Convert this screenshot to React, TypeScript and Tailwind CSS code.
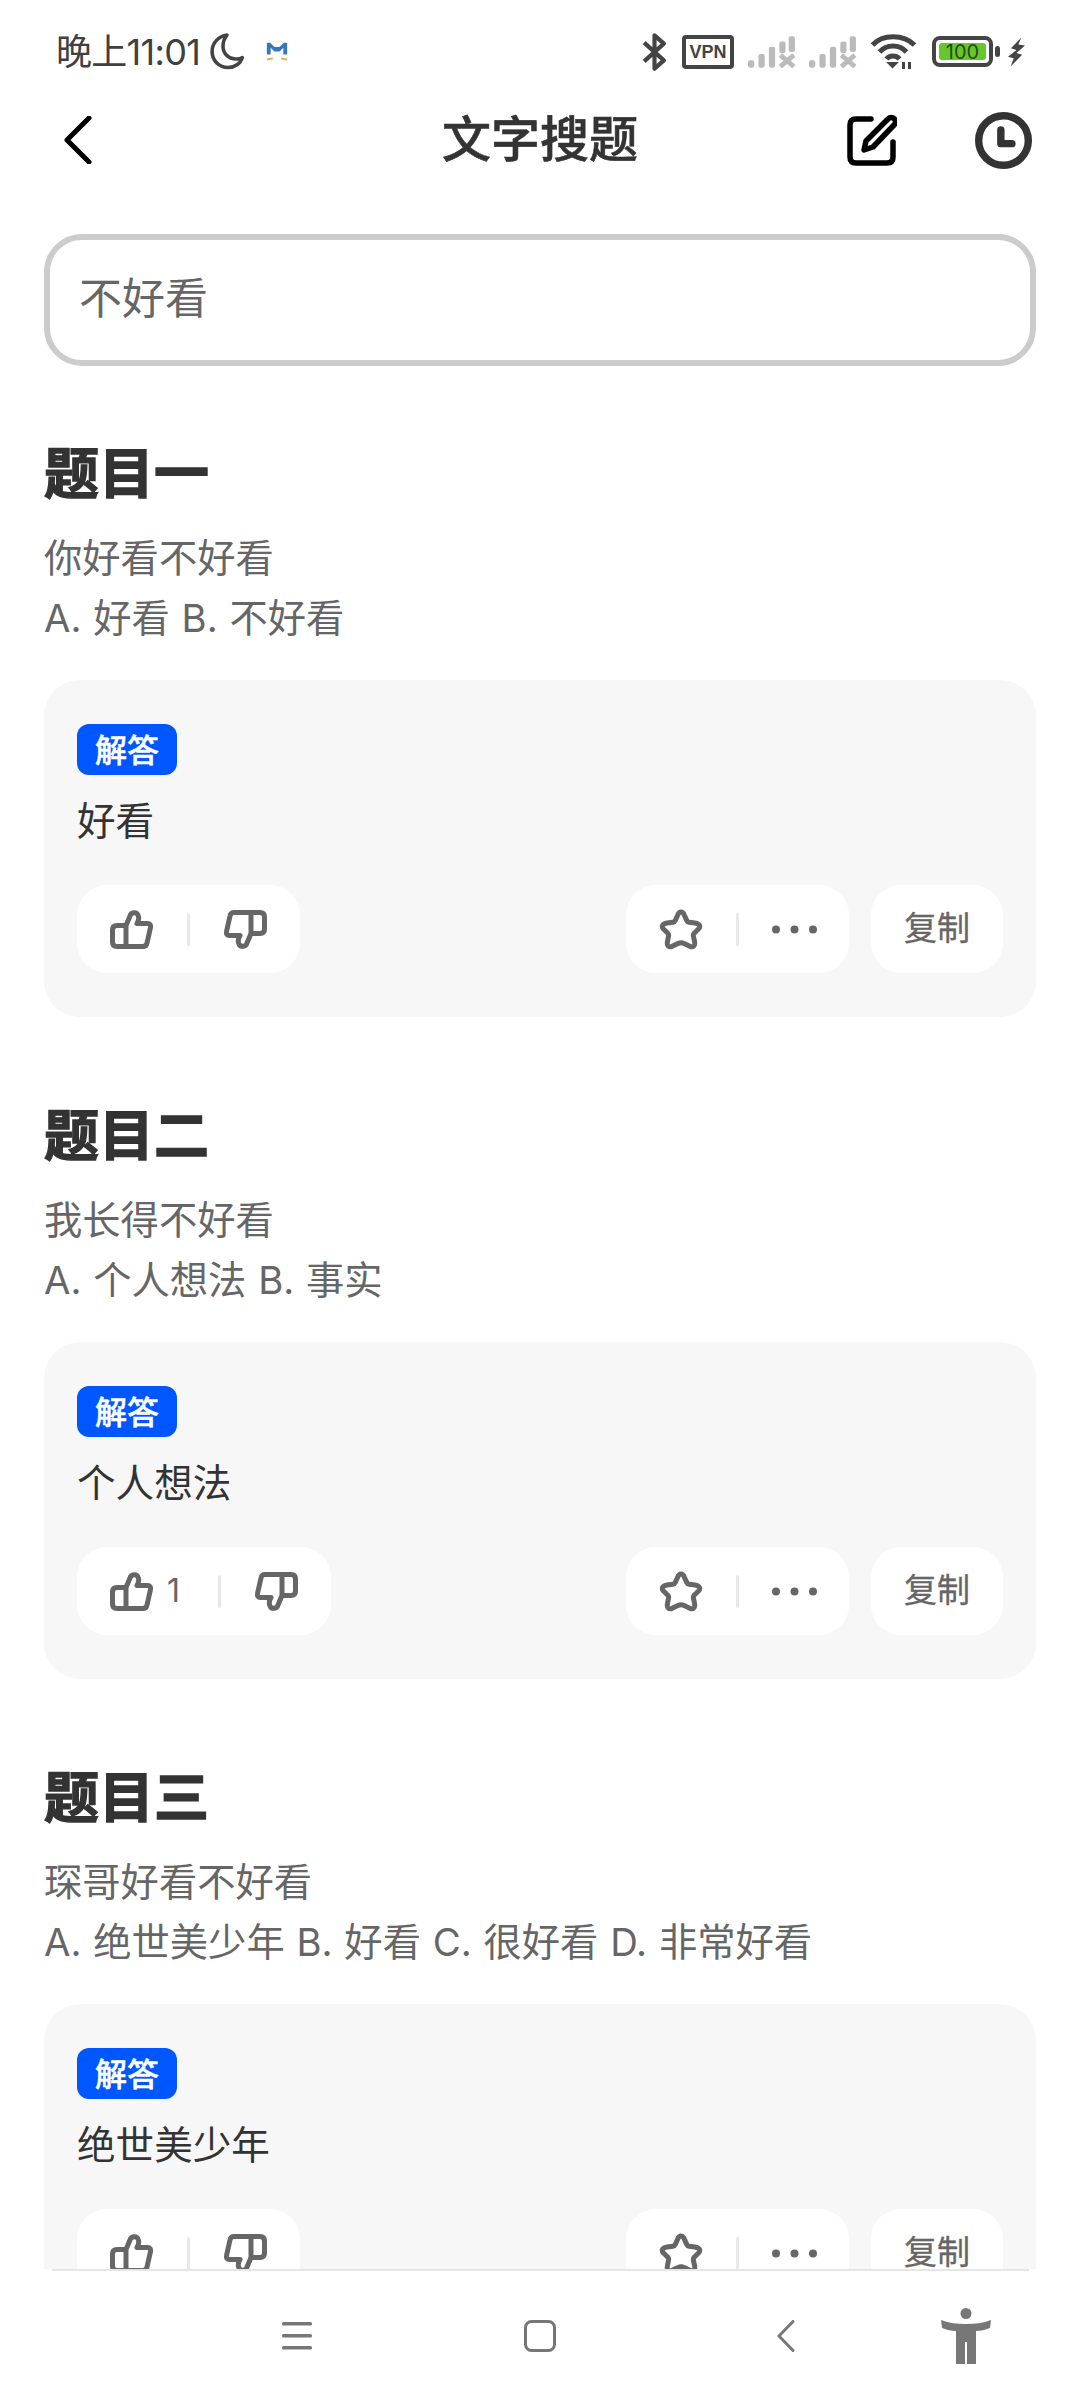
import React from 'react';

const questions = [
  { title: '题目一', text: '你好看不好看', options: 'A. 好看 B. 不好看', answer: '好看', likes: 0 },
  { title: '题目二', text: '我长得不好看', options: 'A. 个人想法 B. 事实', answer: '个人想法', likes: 1 },
  { title: '题目三', text: '琛哥好看不好看', options: 'A. 绝世美少年 B. 好看 C. 很好看 D. 非常好看', answer: '绝世美少年', likes: 0 },
];

const ThumbIcon: React.FC<{ down?: boolean }> = ({ down }) => (
  <svg width="43" height="39" viewBox="0 0 43 39" fill="none" stroke="#666" strokeWidth="5" strokeLinejoin="round" className={down ? 'rotate-180' : ''}>
    <path d="M16 36.5V15.5L20 6C21 2 26.5 1.5 28 5C29.5 8 28.5 11 27 13.5H37.5C40 13.5 41 15.5 40.5 17.5L37 33C36.5 35.5 35 36.5 33 36.5H7C4 36.5 2.5 35 2.5 32V20C2.5 17 4 15.5 7 15.5H16" />
  </svg>
);

const StarIcon = () => (
  <svg width="44" height="41" viewBox="0 0 44 41" fill="none" stroke="#666" strokeWidth="5" strokeLinejoin="round">
    <path d="M22 3C23.5 3 24.5 4 25.5 6.5L27.8 11.6C28.2 12.6 29 13.2 30 13.3L36 14C40.5 14.6 42 17.3 39.5 20L35.2 24.2C34.5 25 34.2 25.8 34.4 26.8L35.6 33C36.3 37.3 34 39 30.3 37L25 34.4C23 33.4 21 33.4 19 34.4L13.7 37C10 39 7.7 37.3 8.4 33L9.6 26.8C9.8 25.8 9.5 25 8.8 24.2L4.5 20C2 17.3 3.5 14.6 8 14L14 13.3C15 13.2 15.8 12.6 16.2 11.6L18.5 6.5C19.5 4 20.5 3 22 3Z" />
  </svg>
);

const Divider = () => <div className="w-[3px] h-[33px] bg-[#e8e8e8] rounded-full" />;

const StatusBar = () => (
  <div className="h-[96px] flex items-center justify-between pl-[56px] pr-[55px] pt-[7px] shrink-0">
    <div className="flex items-center">
      <span className="text-[36px] leading-[44px] text-[#404040] tracking-[-0.7px]">晚上11:01</span>
      <svg width="36" height="37" viewBox="0 0 34 36" fill="none" stroke="#444" strokeWidth="3.5" className="ml-[9px]">
        <path d="M17 2C9 3 2.5 9.5 2.5 18C2.5 27 9.5 33.5 18 33.5C25 33.5 30 29.5 32 24C27 26.5 20 25.5 16 21C12 16.5 12 8 17 2Z" strokeLinejoin="round" />
      </svg>
      <svg width="22" height="22" viewBox="0 0 26 26" className="ml-[21px]">
        <path d="M1 16V2H5L10 7H16L21 2H25V16H20.5V8L16 12.5H10L5.5 8V16Z" fill="#3a76b8" />
        <path d="M1 22L8 20.5M18 20.5L25 22" stroke="#e8a33c" strokeWidth="2" />
      </svg>
    </div>
    <div className="flex items-center">
      <svg width="25" height="40" viewBox="0 0 24 38" fill="none" stroke="#444" strokeWidth="4" strokeLinejoin="round">
        <path d="M2 10L21 27L12 35V3L21 11L2 28" />
      </svg>
      <div className="ml-[15px] w-[52px] h-[34px] border-[4px] border-[#444] rounded-[4px] flex items-center justify-center text-[#444] text-[18px] font-bold leading-none font-['Liberation_Sans',sans-serif]">VPN</div>
      {[0, 1].map((i) => (
        <svg key={i} width="48" height="32" viewBox="0 0 46 30" fill="#bbb" className={i === 0 ? 'ml-[14px]' : 'ml-[13px]'}>
          <rect x="0" y="23" width="6" height="7" rx="2" />
          <rect x="10" y="17" width="6" height="13" rx="2" />
          <rect x="20" y="10" width="6" height="20" rx="2" />
          <rect x="30" y="5" width="6" height="11" rx="2" />
          <rect x="39" y="0" width="6" height="15" rx="2" />
          <path d="M31 18L44 29M44 18L31 29" stroke="#bbb" strokeWidth="4.5" fill="none" />
        </svg>
      ))}
      <svg width="47" height="36" viewBox="0 0 46 36" fill="none" stroke="#444" strokeWidth="5" className="ml-[13px]">
        <path d="M2 11C12 0 33 0 44 11" />
        <path d="M9 18C16 10 29 10 36 18" />
        <path d="M16 25C19 21 26 21 29 25" />
        <path d="M18 29L22 33L26 29Z" fill="#444" strokeWidth="2" />
        <path d="M33 28V35M39 28V35" strokeWidth="3" />
      </svg>
      <div className="ml-[15px] w-[61px] h-[31px] border-[4px] border-[#444] rounded-[8px] p-[3px] flex">
        <div className="flex-1 bg-[#66c72c] rounded-[3px] flex items-center justify-center text-[20px] leading-none text-[#2a4a1a]">100</div>
      </div>
      <div className="ml-[2px] w-[5px] h-[11px] bg-[#444] rounded-full" />
      <svg width="17" height="32" viewBox="0 0 18 30" fill="#444" className="ml-[8px]">
        <path d="M14 0L3 11L9 13L0 20L6 21.5L3 30L15 18L9 16L18 8L11 7Z" />
      </svg>
    </div>
  </div>
);

const Header = () => (
  <div className="h-[88px] shrink-0 relative flex items-center justify-between pl-[64px] pr-[48px]">
    <svg width="28" height="48" viewBox="0 0 28 48" fill="none" stroke="#000" strokeWidth="5" strokeLinecap="round" strokeLinejoin="round">
      <path d="M25 2L3 24L25 46" />
    </svg>
    <span className="absolute left-0 right-0 text-center text-[49px] leading-[60px] font-medium text-[#333] [-webkit-text-stroke:0.6px_#333]">文字搜题</span>
    <div className="flex items-center gap-[78px]">
      <svg width="50" height="52" viewBox="0 0 50 52" fill="none" stroke="#000" strokeWidth="5.5" strokeLinecap="round" strokeLinejoin="round">
        <path d="M24 5H9C5 5 3 7 3 11V43C3 47 5 49 9 49H40C44 49 46 47 46 43V28" />
        <path d="M17 36L19 27L41 5C43 3 46 3 47.5 5C49 7 49 9 47 11L26 33Z" />
      </svg>
      <svg width="57" height="57" viewBox="0 0 54 54" fill="none" stroke="#333">
        <circle cx="27" cy="27" r="23.5" strokeWidth="7" />
        <path d="M24.5 17V30H35" strokeWidth="7" strokeLinecap="round" strokeLinejoin="round" />
      </svg>
    </div>
  </div>
);

const BottomNav = () => (
  <div className="h-[131px] shrink-0 bg-white">
    <div className="mx-[52px] w-[977px] h-[2px] bg-[#e6e6e6]" />
    <div className="h-[129px] flex items-center pl-[282px]">
      <svg width="30" height="28" viewBox="0 0 30 28" fill="#777">
        <rect width="30" height="3.5" y="0" rx="1.5" />
        <rect width="30" height="3.5" y="12" rx="1.5" />
        <rect width="30" height="3.5" y="24" rx="1.5" />
      </svg>
      <svg width="32" height="32" viewBox="0 0 32 32" fill="none" stroke="#777" strokeWidth="3" className="ml-[212px]">
        <rect x="1.5" y="1.5" width="29" height="29" rx="6" />
      </svg>
      <svg width="18" height="32" viewBox="0 0 18 32" fill="none" stroke="#777" strokeWidth="3" strokeLinecap="round" className="ml-[221px]">
        <path d="M16 1.5L2 16L16 30.5" />
      </svg>
      <svg width="50" height="56" viewBox="0 0 50 56" fill="#777" className="ml-[146px]">
        <circle cx="25" cy="5.5" r="5.5" />
        <path d="M0 12C8 15 16 16 25 16C34 16 42 15 50 12L49 20C44 22 40 23 35 23V56H26V34H24V56H15V23C10 23 6 22 1 20Z" />
      </svg>
    </div>
  </div>
);

const Card: React.FC<{ answer: string; likes: number }> = ({ answer, likes }) => (
  <div className="mt-[32px] bg-[#f7f7f7] rounded-[36px] pt-[44px] pb-[44px] px-[33px]">
    <div className="w-[100px] h-[51px] rounded-[12px] bg-[#0057ff] flex items-center justify-center text-white text-[32px] leading-none font-medium pt-[2px] [-webkit-text-stroke:0.5px_#fff]">解答</div>
    <p className="mt-[16px] text-[38.6px] leading-[60px] text-[#333]">{answer}</p>
    <div className="mt-[34px] flex items-center justify-between">
      <div className="h-[88px] bg-white rounded-[30px] px-[33px] flex items-center">
        <ThumbIcon />
        {likes > 0 && <span className="ml-[14px] text-[32px] text-[#666] w-[16px]">{likes}</span>}
        <div className={likes > 0 ? 'ml-[35px] mr-[34px]' : 'mx-[34px]'}><Divider /></div>
        <ThumbIcon down />
      </div>
      <div className="flex items-center gap-[22px]">
        <div className="h-[88px] bg-white rounded-[30px] pl-[33px] pr-[32px] flex items-center">
          <StarIcon />
          <div className="mx-[33px]"><Divider /></div>
          <svg width="45" height="9" viewBox="0 0 45 9" fill="#666">
            <circle cx="4" cy="4.5" r="4" />
            <circle cx="22.5" cy="4.5" r="4" />
            <circle cx="41" cy="4.5" r="4" />
          </svg>
        </div>
        <div className="w-[132px] h-[88px] bg-white rounded-[30px] flex items-center justify-center text-[33px] text-[#666] [-webkit-text-stroke:0.3px_#666]">复制</div>
      </div>
    </div>
  </div>
);

export default function App() {
  return (
    <div className="w-[1080px] h-[2400px] bg-white flex flex-col overflow-hidden font-['Inter','Noto_Sans_CJK_SC',sans-serif]">
      <StatusBar />
      <Header />
      <main className="flex-1 overflow-hidden px-[44px] pt-[50px]">
        <div className="h-[132px] border-[6px] border-[#cccccc] rounded-[38px] flex items-center pl-[29px] pb-[4px] text-[43px] text-[#666]">不好看</div>
        <div className="mt-[67px] flex flex-col gap-[78px]">
          {questions.map((q) => (
            <section key={q.title}>
              <h2 className="text-[55px] leading-[80px] font-bold text-[#333] [-webkit-text-stroke:1.4px_#333]">{q.title}</h2>
              <div className="mt-[15px] text-[38.3px] leading-[60px] text-[#666] [word-spacing:1px]">
                <p>{q.text}</p>
                <p>{q.options}</p>
              </div>
              <Card answer={q.answer} likes={q.likes} />
            </section>
          ))}
        </div>
      </main>
      <BottomNav />
    </div>
  );
}
